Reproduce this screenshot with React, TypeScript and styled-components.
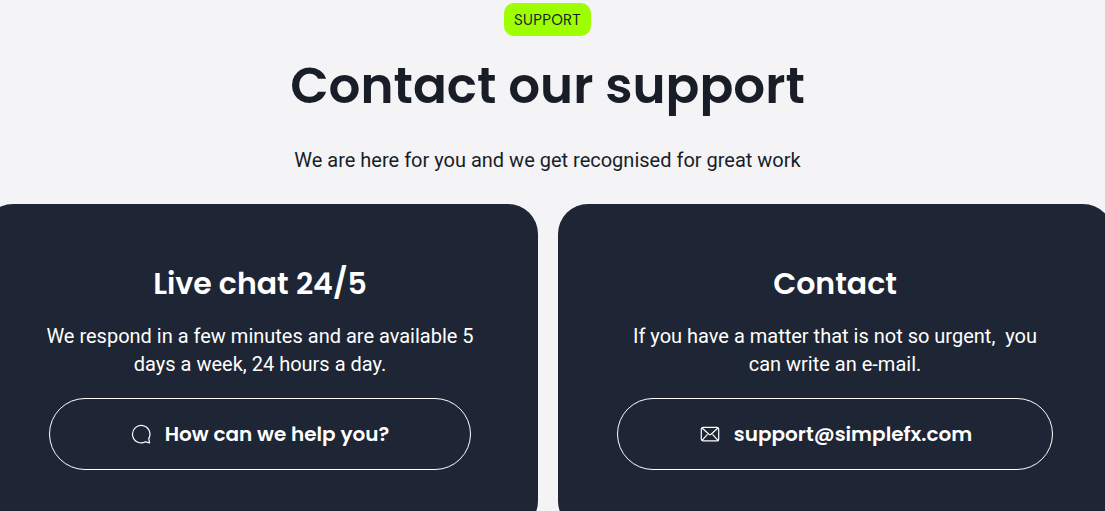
import React from "react";
import styled, {createGlobalStyle} from "styled-components";

const GlobalStyles = createGlobalStyle`
    *{
        box-sizing: border-box;
        margin: 0;
        padding: 0;
    }
    body{
        background-color: #f4f4f6;
        overflow: hidden;
        font-family: Roboto, sans-serif;
        color: #181d28;
    }
`

const Section = styled.section`
    height: 511px;
    overflow: hidden;
    padding-top: 3px;
`

const Header = styled.header`
    width: 1095px;
    display: flex;
    flex-direction: column;
    align-items: center;
`

const Badge = styled.span`
    width: 87px;
    height: 33px;
    line-height: 34px;
    border-radius: 10px;
    background-color: #9dff00;
    font-family: "DM Sans", Poppins, sans-serif;
    font-size: 15px;
    letter-spacing: 0.3px;
    text-align: center;
`

const Title = styled.h1`
    margin-top: 12px;
    height: 76px;
    line-height: 76px;
    font-family: Poppins, Inter, sans-serif;
    font-size: 50px;
    font-weight: 600;
    white-space: nowrap;
`

const Lead = styled.p`
    margin-top: 22px;
    line-height: 28px;
    font-size: 20px;
`

const Cards = styled.div`
    width: 1130px;
    margin-top: 30px;
    margin-left: -17.5px;
    display: flex;
    gap: 20px;
`

const Card = styled.article`
    flex: 1;
    height: 327px;
    padding-top: 57px;
    border-radius: 30px;
    background-color: #1e2534;
    color: white;
    display: flex;
    flex-direction: column;
    align-items: center;
    text-align: center;
    h2{
        line-height: 46px;
        font-family: Poppins, Inter, sans-serif;
        font-size: 30px;
        font-weight: 600;
    }
    p{
        margin-top: 15px;
        line-height: 28px;
        font-size: 20px;
        white-space: pre;
    }
`

const Button = styled.a<{$width: number; $indent?: number}>`
    width: ${({$width}) => $width}px;
    height: 72px;
    margin-top: 20px;
    padding-left: ${({$indent = 0}) => $indent}px;
    border: 1px solid white;
    border-radius: 36px;
    display: flex;
    justify-content: center;
    align-items: center;
    gap: 14px;
    font-family: Poppins, Inter, sans-serif;
    font-size: 20px;
    font-weight: 600;
`

const ChatIcon = () => (
    <svg width="20" height="20" viewBox="0 0 20 20" fill="none" stroke="white" strokeWidth="1.2" strokeLinejoin="round">
        <path d="M18.6 18.8L17.7 14.6A8.7 8.7 0 1 0 14.4 17.8Z"/>
    </svg>
)

const MailIcon = () => (
    <svg width="20" height="20" viewBox="0 0 20 20" fill="none" stroke="white" strokeWidth="1.2">
        <rect x="1.3" y="3.3" width="17.4" height="13.6" rx="2"/>
        <path d="M2 4l7 6.2q1 .8 2 0L18 4M2 16.3l5.5-6M18 16.3l-5.5-6"/>
    </svg>
)

const App = ()=>{
    return (
        <Section>
            <GlobalStyles/>
            <Header>
                <Badge>SUPPORT</Badge>
                <Title>Contact our support</Title>
                <Lead>We are here for you and we get recognised for great work</Lead>
            </Header>
            <Cards>
                <Card>
                    <h2>Live chat 24/5</h2>
                    <p>{"We respond in a few minutes and are available 5\ndays a week, 24 hours a day."}</p>
                    <Button $width={422}><ChatIcon/>How can we help you?</Button>
                </Card>
                <Card>
                    <h2>Contact</h2>
                    <p>{"If you have a matter that is not so urgent,  you\ncan write an e-mail."}</p>
                    <Button $width={436} $indent={2}><MailIcon/>support@simplefx.com</Button>
                </Card>
            </Cards>
        </Section>
    )
}

export default App;
